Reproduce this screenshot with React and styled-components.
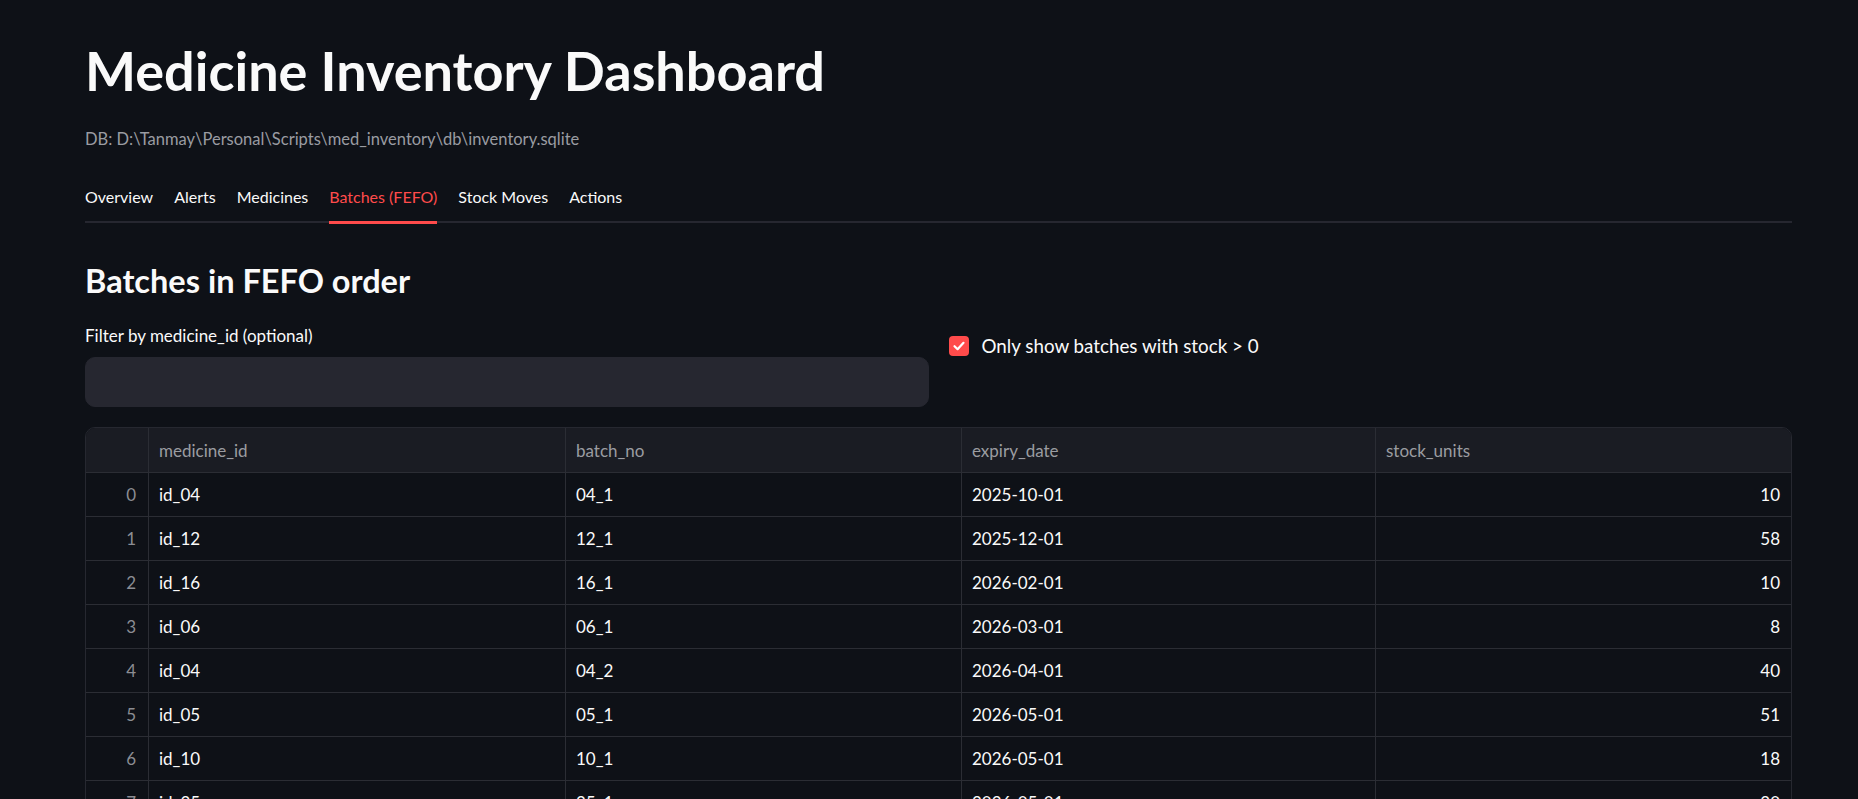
import styled, { createGlobalStyle } from 'styled-components';

const GlobalStyle = createGlobalStyle`
  html, body {
    margin: 0;
    padding: 0;
    background: #0e1117;
    overflow: hidden;
  }
  body {
    font-family: Lato, "Noto Sans", sans-serif;
    color: #fafafa;
  }
`;

const tabs = ['Overview', 'Alerts', 'Medicines', 'Batches (FEFO)', 'Stock Moves', 'Actions'];

const columns = [
  { key: 'medicine_id', align: 'left' },
  { key: 'batch_no', align: 'left' },
  { key: 'expiry_date', align: 'left' },
  { key: 'stock_units', align: 'right' },
];

const rows = [
  ['id_04', '04_1', '2025-10-01', 10],
  ['id_12', '12_1', '2025-12-01', 58],
  ['id_16', '16_1', '2026-02-01', 10],
  ['id_06', '06_1', '2026-03-01', 8],
  ['id_04', '04_2', '2026-04-01', 40],
  ['id_05', '05_1', '2026-05-01', 51],
  ['id_10', '10_1', '2026-05-01', 18],
  ['id_25', '25_1', '2026-05-01', 20],
];

function App() {
  return (
    <>
      <GlobalStyle />
      <Page>
        <Title>Medicine Inventory Dashboard</Title>
        <Caption>DB: D:\Tanmay\Personal\Scripts\med_inventory\db\inventory.sqlite</Caption>
        <TabList>
          {tabs.map(tab => (
            <Tab key={tab} active={tab === 'Batches (FEFO)'}>
              {tab}
            </Tab>
          ))}
        </TabList>
        <Heading>Batches in FEFO order</Heading>
        <Controls>
          <Field>
            <Label>Filter by medicine_id (optional)</Label>
            <TextInput type="text" />
          </Field>
          <CheckRow>
            <CheckBox>
              <svg width="14" height="14" viewBox="0 0 14 14">
                <polyline points="2.5,7.2 5.6,10.2 11.5,3.8" fill="none" stroke="#fff" strokeWidth="2.2" strokeLinecap="round" strokeLinejoin="round" />
              </svg>
            </CheckBox>
            <CheckLabel>Only show batches with stock &gt; 0</CheckLabel>
          </CheckRow>
        </Controls>
        <Grid>
          <HeadRow>
            <HeadCell />
            {columns.map(col => (
              <HeadCell key={col.key}>{col.key}</HeadCell>
            ))}
          </HeadRow>
          {rows.map((row, i) => (
            <Row key={i}>
              <IndexCell>{i}</IndexCell>
              {row.map((value, j) => (
                <Cell key={j} align={columns[j].align}>
                  {value}
                </Cell>
              ))}
            </Row>
          ))}
        </Grid>
      </Page>
    </>
  );
}

export default App;

const Page = styled.div`
  padding: 38px 66px 0 85px;
  display: flex;
  flex-direction: column;
`;

const Title = styled.h1`
  margin: 0;
  font-size: 54px;
  font-weight: 700;
  line-height: 66px;
`;

const Caption = styled.div`
  margin-top: 23px;
  font-size: 16.5px;
  line-height: 24px;
  color: #9a9ca2;
`;

const TabList = styled.div`
  margin-top: 34px;
  display: flex;
  gap: 21px;
  border-bottom: 2px solid #262730;
`;

const Tab = styled.div`
  font-size: 16px;
  line-height: 24px;
  padding-bottom: 12px;
  margin-bottom: -3px;
  border-bottom: 3px solid ${props => (props.active ? '#ff4b4b' : 'transparent')};
  color: ${props => (props.active ? '#ff4b4b' : '#fafafa')};
`;

const Heading = styled.h3`
  margin: 37px 0 0;
  font-size: 32.5px;
  font-weight: 700;
  line-height: 42px;
`;

const Controls = styled.div`
  margin-top: 22px;
  display: grid;
  grid-template-columns: 1fr 1fr;
  gap: 20px;
`;

const Field = styled.div`
  display: flex;
  flex-direction: column;
`;

const Label = styled.label`
  font-size: 17px;
  line-height: 24px;
  margin-bottom: 9px;
`;

const TextInput = styled.input`
  height: 50px;
  box-sizing: border-box;
  border: 1px solid #262730;
  border-radius: 10px;
  background: #262730;
  color: #fafafa;
  outline: none;
  padding: 0 16px;
  font: inherit;
`;

const CheckRow = styled.div`
  display: flex;
  align-items: center;
  gap: 13px;
  margin-top: 10px;
  height: 24px;
`;

const CheckBox = styled.span`
  width: 20px;
  height: 20px;
  border-radius: 4px;
  background: #ff4b4b;
  display: flex;
  align-items: center;
  justify-content: center;
`;

const CheckLabel = styled.span`
  font-size: 18.8px;
  line-height: 24px;
`;

const Grid = styled.div`
  margin-top: 20px;
  border: 1px solid #262830;
  border-radius: 10px;
  overflow: hidden;
  font-size: 17px;
`;

const HeadRow = styled.div`
  display: grid;
  grid-template-columns: 63px 417px 396px 414px 1fr;
  height: 44px;
  background: #1a1c23;
  border-bottom: 1px solid #2b2d34;
`;

const Row = styled.div`
  display: grid;
  grid-template-columns: 63px 417px 396px 414px 1fr;
  height: 43px;
  background: #0e1117;
  border-bottom: 1px solid #2b2d34;
`;

const HeadCell = styled.div`
  display: flex;
  align-items: center;
  padding: 0 10px;
  color: #9b9ca1;
  border-right: 1px solid #2b2d34;
  &:last-child {
    border-right: none;
  }
`;

const Cell = styled.div`
  display: flex;
  align-items: center;
  justify-content: ${props => (props.align === 'right' ? 'flex-end' : 'flex-start')};
  padding: 0 11px 0 10px;
  color: #fafafa;
  border-right: 1px solid #2b2d34;
  &:last-child {
    border-right: none;
  }
`;

const IndexCell = styled(Cell)`
  justify-content: flex-end;
  padding-right: 12px;
  color: #8b8d93;
`;
